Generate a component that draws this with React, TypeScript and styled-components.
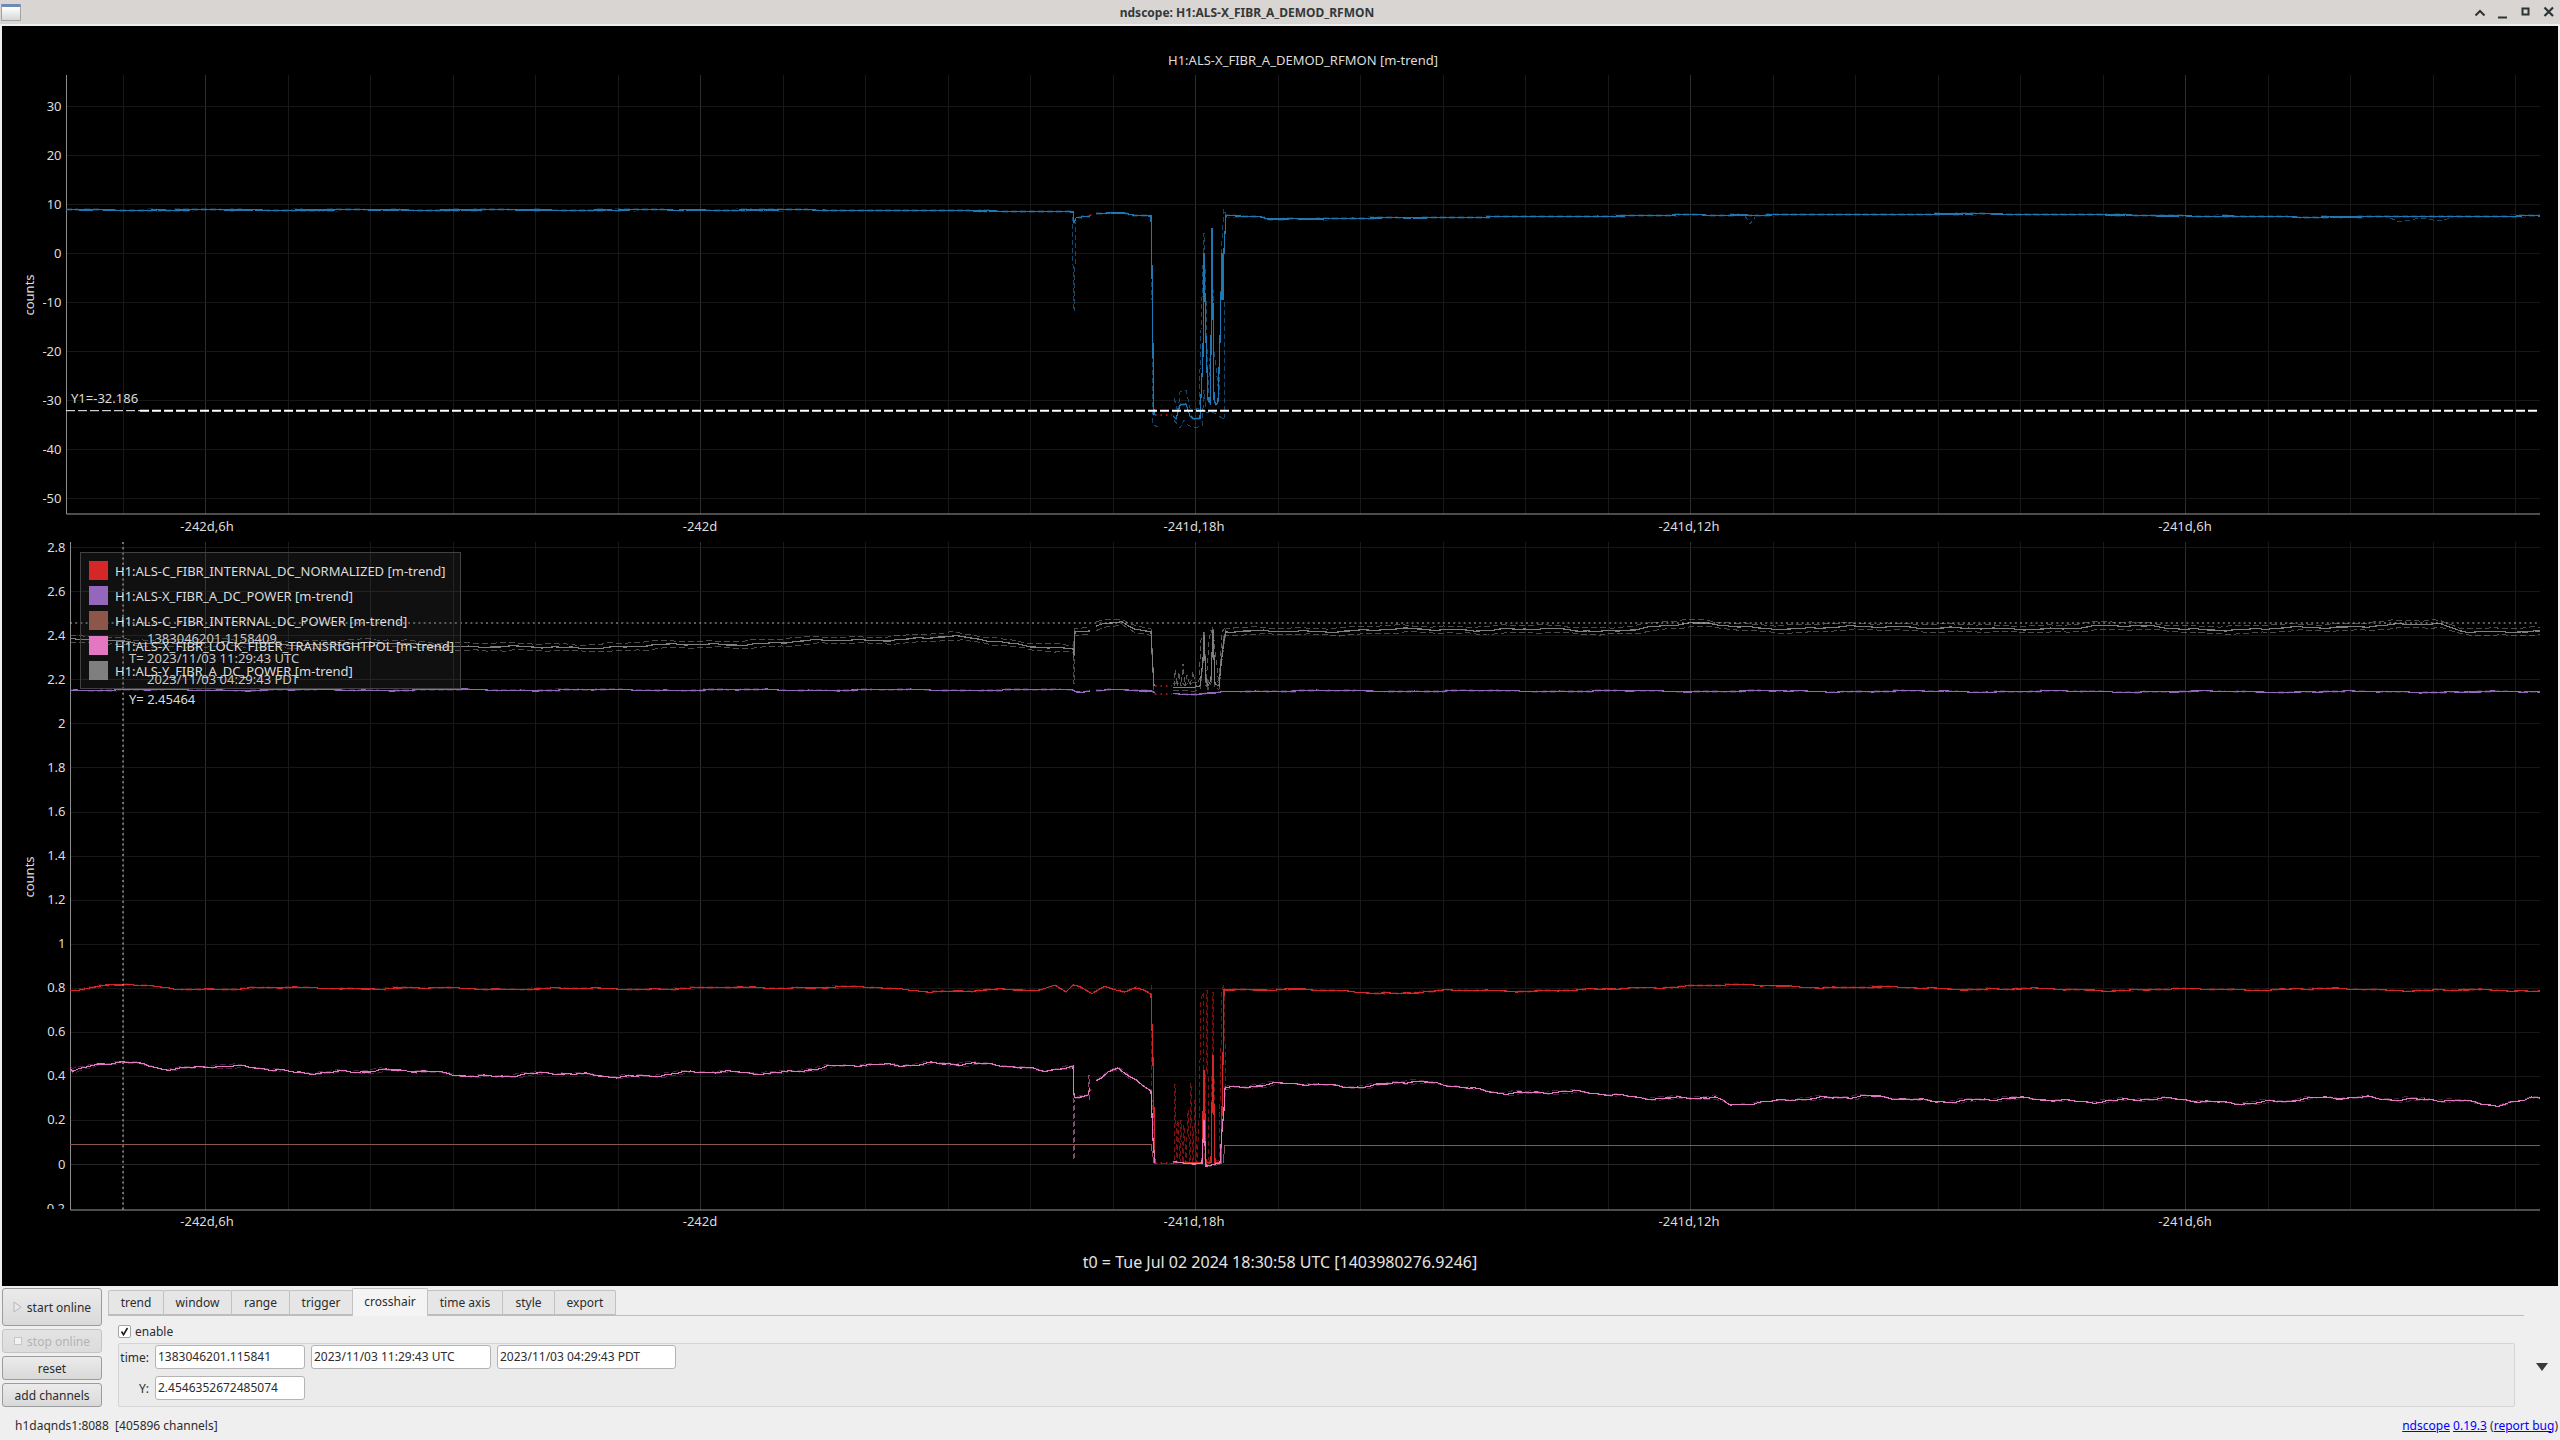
import React from 'react'
import styled, { createGlobalStyle } from 'styled-components'

type Pt = [number, number]

const GlobalStyle = createGlobalStyle`
  html, body {
    margin: 0;
    padding: 0;
    background: #efefef;
  }
  body {
    font-family: "Noto Sans", "Liberation Sans", sans-serif;
  }
`

const Window = styled.div`
  width: 2560px;
  height: 1440px;
  display: flex;
  flex-direction: column;
  background: #efefef;
  overflow: hidden;
`

const TitleBar = styled.div`
  height: 24px;
  flex: none;
  display: flex;
  align-items: center;
  background: #d8d5d2;
`

const AppIcon = styled.div`
  width: 18px;
  height: 13px;
  margin-left: 1px;
  border: 1px solid #a3a3a3;
  border-top: 3px solid #6c8ab8;
  border-radius: 1px;
  background: linear-gradient(#ffffff, #d5d8d8);
`

const TitleText = styled.div`
  flex: 1;
  text-align: center;
  font-size: 12px;
  font-weight: 700;
  color: #33383a;
`

const WindowButtons = styled.div`
  display: flex;
  gap: 9px;
  padding-right: 4px;
  svg {
    width: 14px;
    height: 14px;
    display: block;
  }
`

const PlotStage = styled.div`
  position: relative;
  flex: none;
  height: 1260px;
  margin: 2px 2px 0;
  background: #000;
  display: flex;
  flex-direction: column;
`

const PlotSvg = styled.svg`
  display: block;
  flex: none;
  width: 2556px;
  text {
    font-family: "Noto Sans", "Liberation Sans", sans-serif;
    font-size: 13px;
    fill: #dcdcdc;
  }
`

const Legend = styled.div`
  position: absolute;
  left: 78px;
  top: 526px;
  width: 381px;
  height: 137px;
  box-sizing: border-box;
  padding: 8px 0 0 8px;
  background: rgba(100, 100, 100, 0.16);
  border: 1px solid #424242;
  display: flex;
  flex-direction: column;
  gap: 6px;
`

const LegendRow = styled.div`
  height: 19px;
  display: flex;
  align-items: center;
  gap: 7px;
  font-size: 13px;
  color: #dcdcdc;
  white-space: nowrap;
`

const Swatch = styled.span<{ $color: string }>`
  width: 19px;
  height: 19px;
  flex: none;
  background: ${(p) => p.$color};
`

const TimeZero = styled.div`
  flex: 1;
  display: flex;
  align-items: center;
  justify-content: center;
  padding: 0 0 3px 0;
  font-size: 16px;
  color: #e4e4e4;
`

const Controls = styled.div`
  flex: none;
  display: flex;
  height: 122px;
  padding: 2px 0 0 2px;
  font-size: 12px;
  color: #2c2c2c;
`

const SideButtons = styled.div`
  width: 100px;
  flex: none;
  display: flex;
  flex-direction: column;
  gap: 3px;
`

const SideButton = styled.div<{ $tall?: boolean; $disabled?: boolean }>`
  height: ${(p) => (p.$tall ? 38 : 24)}px;
  box-sizing: border-box;
  display: flex;
  align-items: center;
  justify-content: center;
  gap: 5px;
  border: 1px solid ${(p) => (p.$disabled ? '#c4c4c4' : '#9c9c9c')};
  border-radius: 3px;
  background: ${(p) =>
    p.$disabled
      ? 'linear-gradient(#e3e3e3, #dcdcdc)'
      : 'linear-gradient(#ebebeb, #d9d9d9)'};
  color: ${(p) => (p.$disabled ? '#b4b4b4' : '#2c2c2c')};
  white-space: nowrap;
`

const TabColumn = styled.div`
  width: 2416px;
  margin-left: 6px;
  flex: none;
`

const TabBar = styled.div`
  height: 27px;
  display: flex;
  align-items: flex-end;
  border-bottom: 1px solid #bdbdbd;
`

const Tab = styled.div<{ $active?: boolean; $w: number }>`
  width: ${(p) => p.$w}px;
  height: ${(p) => (p.$active ? 28 : 25)}px;
  box-sizing: border-box;
  display: flex;
  align-items: center;
  justify-content: center;
  padding-bottom: ${(p) => (p.$active ? 3 : 0)}px;
  margin-bottom: ${(p) => (p.$active ? -1 : 0)}px;
  background: ${(p) => (p.$active ? '#f4f4f4' : '#e6e6e6')};
  border: 1px solid #c2c2c2;
  border-bottom: ${(p) => (p.$active ? 'none' : '1px solid #bdbdbd')};
  border-radius: 2px 2px 0 0;
  margin-right: -1px;
  position: relative;
  z-index: ${(p) => (p.$active ? 1 : 0)};
`

const TabBody = styled.div`
  padding: 9px 9px 0 10px;
`

const EnableRow = styled.label`
  height: 13px;
  display: flex;
  align-items: center;
  gap: 4px;
  margin-bottom: 5px;
`

const CheckBox = styled.span`
  width: 13px;
  height: 13px;
  box-sizing: border-box;
  background: #fff;
  border: 1px solid #a4a4a4;
  border-radius: 2px;
  display: flex;
  align-items: center;
  justify-content: center;
`

const GroupBox = styled.div`
  height: 64px;
  box-sizing: border-box;
  border: 1px solid #d4d4d4;
  border-radius: 2px;
  background: #ebebeb;
  padding: 1px 0 0 1px;
  display: grid;
  grid-template-columns: 29px 150px 180px 179px;
  grid-auto-rows: 24px;
  column-gap: 6px;
  row-gap: 7px;
  align-items: center;
  justify-content: start;
`

const FieldLabel = styled.div`
  text-align: right;
`

const TextInput = styled.div`
  height: 24px;
  box-sizing: border-box;
  padding: 0 2px;
  line-height: 22px;
  background: #fff;
  border: 1px solid #b4b4b4;
  border-radius: 3px;
  white-space: nowrap;
  overflow: hidden;
`

const ExpandColumn = styled.div`
  flex: 1;
  display: flex;
  justify-content: center;
  padding-top: 75px;
`

const Arrow = styled.span`
  width: 0;
  height: 0;
  border-left: 6px solid transparent;
  border-right: 6px solid transparent;
  border-top: 8px solid #3a3a3a;
`

const StatusBar = styled.div`
  flex: 1;
  display: flex;
  align-items: center;
  justify-content: space-between;
  padding: 0 2px 0 15px;
  font-size: 12px;
  color: #2c2c2c;
  white-space: pre;
`

const StatusLink = styled.a`
  color: #0000ff;
  text-decoration: underline;
`

// wobbly line through key points, stepped a bit like min-trend data
function wave(pts: Pt[], amp: number, seed: number, off = 0): string {
  const out: string[] = []
  for (let i = 0; i < pts.length - 1; i++) {
    const [x0, y0] = pts[i]
    const [x1, y1] = pts[i + 1]
    const n = Math.max(1, Math.floor((x1 - x0) / 6))
    for (let k = 0; k < n; k++) {
      const x = x0 + ((x1 - x0) * k) / n
      const y = y0 + ((y1 - y0) * k) / n
      const noise =
        n > 1
          ? amp *
            (Math.sin(x * 0.043 + seed) +
              0.6 * Math.sin(x * 0.127 + seed * 2) +
              0.35 * Math.sin(x * 0.31 + seed * 3))
          : 0
      out.push(`${x.toFixed(1)},${(y + noise + off).toFixed(1)}`)
    }
  }
  const last = pts[pts.length - 1]
  out.push(`${last[0]},${last[1] + off}`)
  return out.join(' ')
}

const Trace: React.FC<{
  segments: Pt[][]
  color: string
  amp?: number
  seed?: number
  dev?: number
  width?: number
  dashOpacity?: number
}> = ({ segments, color, amp = 0.6, seed = 1, dev = 1.5, width = 1.2, dashOpacity = 0.35 }) => (
  <g fill="none" shapeRendering="crispEdges">
    {segments.map((s, i) => (
      <g key={i}>
        {dev > 0 && (
          <>
            <polyline
              points={wave(s, amp, seed + 0.4, -dev)}
              stroke={color}
              strokeOpacity={dashOpacity}
              strokeWidth={1}
              strokeDasharray="6 3"
            />
            <polyline
              points={wave(s, amp, seed - 0.4, dev)}
              stroke={color}
              strokeOpacity={dashOpacity}
              strokeWidth={1}
              strokeDasharray="6 3"
            />
          </>
        )}
        <polyline points={wave(s, amp, seed)} stroke={color} strokeWidth={width} />
      </g>
    ))}
  </g>
)

const DashLine: React.FC<{ pts: Pt[]; color: string; opacity?: number }> = ({
  pts,
  color,
  opacity = 0.6,
}) => (
  <polyline
    points={pts.map((p) => p.join(',')).join(' ')}
    fill="none"
    stroke={color}
    strokeOpacity={opacity}
    strokeWidth={1}
    strokeDasharray="5 3"
    shapeRendering="crispEdges"
  />
)

const Dropout: React.FC<{ x0: number; x1: number; y: number }> = ({ x0, x1, y }) => (
  <line x1={x0} x2={x1} y1={y} y2={y} stroke="#f01010" strokeWidth={1.3} strokeDasharray="1.5 4" />
)

const TIME_TICKS: [number, string][] = [
  [207, '-242d,6h'],
  [700, '-242d'],
  [1194, '-241d,18h'],
  [1689, '-241d,12h'],
  [2185, '-241d,6h'],
]

const gridXs: number[] = []
for (let x = 1195 - 82.5 * 13; x < 2540; x += 82.5) gridXs.push(x)

const Grid: React.FC<{ x0: number; y0: number; y1: number; ys: number[] }> = ({ x0, y0, y1, ys }) => (
  <g strokeWidth={1}>
    {gridXs.map((x) => {
      const major = Math.abs(((x - 1195) / 495) % 1) < 0.01
      return (
        <line
          key={x}
          x1={Math.round(x) + 0.5}
          x2={Math.round(x) + 0.5}
          y1={y0}
          y2={y1}
          stroke={major ? '#2e2e2e' : '#191919'}
        />
      )
    })}
    {ys.map((y) => (
      <line key={y} x1={x0} x2={2540} y1={Math.round(y) + 0.5} y2={Math.round(y) + 0.5} stroke="#171717" />
    ))}
  </g>
)

const Axes: React.FC<{
  x: number
  top: number
  bottom: number
  ticks: [number, string][]
  labelY: number
  countsY: number
}> = ({ x, top, bottom, ticks, labelY, countsY }) => (
  <g>
    <line x1={x} x2={x} y1={top} y2={bottom} stroke="#8c8c8c" />
    <line x1={x} x2={2540} y1={bottom} y2={bottom} stroke="#9a9a9a" strokeWidth={1.2} />
    {ticks.map(([y, t]) => (
      <text key={t} x={x - 5} y={y + 4.5} textAnchor="end">
        {t}
      </text>
    ))}
    {TIME_TICKS.map(([tx, t]) => (
      <text key={t} x={tx} y={labelY} textAnchor="middle">
        {t}
      </text>
    ))}
    <text transform={`translate(34 ${countsY}) rotate(-90)`} textAnchor="middle">
      counts
    </text>
  </g>
)

const topTicks: [number, string][] = [30, 20, 10, 0, -10, -20, -30, -40, -50].map((v) => [
  253 - v * 4.9,
  String(v),
])
const botVals = [2.8, 2.6, 2.4, 2.2, 2, 1.8, 1.6, 1.4, 1.2, 1, 0.8, 0.6, 0.4, 0.2, 0]
const botTicks: [number, string][] = botVals.map((v) => [1164 - v * 220.3, String(v)])

const blue: Pt[][] = [
  [[66, 210], [400, 210], [800, 210], [1000, 211], [1073, 212], [1074, 223], [1076, 218], [1090, 216]],
  [
    [1096, 214], [1110, 213], [1125, 213], [1132, 215], [1151, 216], [1152, 270], [1153, 350], [1154, 415],
  ],
  [
    [1173, 416], [1176, 419], [1180, 405], [1186, 404], [1190, 416], [1194, 419], [1200, 418], [1201, 396],
    [1203, 355], [1204, 253], [1206, 340], [1208, 400], [1210, 403], [1211, 350], [1212, 228], [1213, 310],
    [1214, 400], [1216, 405], [1218, 402], [1220, 340], [1222, 253], [1223, 300], [1224, 250], [1226, 216],
    [1262, 217], [1268, 219], [1400, 218], [1700, 215], [2000, 214], [2300, 217], [2540, 216],
  ],
]

const grey: Pt[][] = [
  [
    [70, 640], [130, 642], [250, 644], [400, 644], [530, 648], [650, 646], [800, 642], [950, 637], [1030, 645],
    [1073, 649], [1074, 655], [1075, 632], [1090, 631],
  ],
  [[1096, 627], [1112, 623], [1122, 623], [1135, 629], [1151, 632], [1153, 670], [1154, 686]],
  [
    [1173, 686], [1200, 686], [1203, 660], [1204, 635], [1206, 680], [1208, 686], [1211, 680], [1213, 630],
    [1215, 684], [1219, 686], [1221, 665], [1224, 640], [1226, 632], [1270, 632], [1290, 631], [1400, 630],
    [1500, 629], [1600, 631], [1690, 624], [1800, 629], [1900, 626], [2000, 630], [2100, 626], [2250, 630],
    [2380, 625], [2440, 625], [2460, 631], [2540, 631],
  ],
]

const purple: Pt[][] = [
  [[70, 690], [1073, 690], [1076, 692], [1090, 691]],
  [[1096, 690], [1120, 689], [1152, 691], [1155, 693]],
  [[1173, 694], [1195, 695], [1215, 693], [1225, 691], [1500, 691], [2540, 692]],
]

const red: Pt[][] = [
  [
    [70, 990], [100, 986], [130, 985], [175, 989], [300, 988], [600, 989], [850, 987], [930, 991], [1000, 990],
    [1040, 991], [1055, 985], [1066, 992], [1073, 985], [1080, 986], [1092, 993], [1105, 986], [1125, 992],
    [1135, 988], [1151, 994], [1153, 1060], [1155, 1163],
  ],
  [
    [1173, 1163], [1202, 1163], [1204, 1070], [1206, 1163], [1211, 1162], [1213, 1055],
    [1215, 1163], [1221, 1163], [1223, 1060], [1224, 990], [1226, 989], [1300, 990], [1400, 993],
    [1450, 991], [1600, 990], [1700, 985], [1900, 988], [2100, 990], [2300, 989], [2540, 991],
  ],
]

const pink: Pt[][] = [
  [
    [70, 1068], [73, 1070], [122, 1063], [163, 1068], [212, 1065], [294, 1073], [343, 1070], [490, 1075],
    [653, 1075], [784, 1071], [931, 1062], [1045, 1070], [1060, 1066], [1073, 1066], [1074, 1095], [1075, 1097],
    [1088, 1095], [1090, 1088],
  ],
  [
    [1096, 1080], [1108, 1072], [1118, 1069], [1130, 1080], [1142, 1085], [1151, 1091], [1153, 1140], [1155, 1163],
  ],
  [
    [1173, 1163], [1202, 1163], [1204, 1120], [1206, 1163], [1220, 1163], [1222, 1130], [1224, 1110], [1225, 1087],
    [1300, 1085], [1370, 1085], [1400, 1082], [1500, 1091], [1640, 1096], [1715, 1099], [1730, 1107], [1796, 1097],
    [1960, 1100], [2125, 1100], [2286, 1102], [2368, 1096], [2450, 1102], [2498, 1105], [2531, 1097], [2540, 1098],
  ],
]

const brown: Pt[][] = [
  [[70, 1144.5], [1151, 1144.5], [1154, 1163]],
  [[1223, 1163], [1225, 1145.5], [2540, 1145.5]],
]

const WindowControls = () => (
  <WindowButtons>
    <svg viewBox="0 0 14 14">
      <path d="M2.5 10.5 7 6l4.5 4.5" fill="none" stroke="#2e3436" strokeWidth="2" />
    </svg>
    <svg viewBox="0 0 14 14">
      <rect x="2" y="11.5" width="9" height="2" fill="#2e3436" />
    </svg>
    <svg viewBox="0 0 14 14">
      <rect x="3.5" y="3.5" width="6" height="6" fill="none" stroke="#2e3436" strokeWidth="2" />
    </svg>
    <svg viewBox="0 0 14 14">
      <path d="M2.5 2.5l8.5 8.5M11 2.5l-8.5 8.5" fill="none" stroke="#2e3436" strokeWidth="2.2" />
    </svg>
  </WindowButtons>
)

const TopPlot = () => (
  <PlotSvg viewBox="2 26 2556 512" height={512}>
    <text x={1303} y={65} textAnchor="middle">
      H1:ALS-X_FIBR_A_DEMOD_RFMON [m-trend]
    </text>
    <Grid x0={66} y0={75} y1={514} ys={topTicks.map((t) => t[0])} />
    <Axes x={66.5} top={75} bottom={514} ticks={topTicks} labelY={531} countsY={295} />
    <Trace segments={blue} color="#1f77b4" amp={0.25} seed={2} dev={1} dashOpacity={0.3} />
    <DashLine pts={[[1072, 216], [1074, 312], [1076, 222]]} color="#1f77b4" />
    <DashLine pts={[[1151, 218], [1152, 300], [1153, 425], [1158, 427]]} color="#1f77b4" />
    <DashLine
      pts={[[1174, 398], [1178, 412], [1180, 392], [1186, 390], [1190, 408], [1194, 410], [1199, 408], [1201, 330], [1204, 233], [1206, 300], [1208, 395], [1211, 340], [1212, 229], [1214, 350], [1219, 395], [1222, 240], [1224, 209], [1226, 216]]}
      color="#1f77b4"
    />
    <DashLine
      pts={[[1174, 420], [1180, 428], [1184, 420], [1188, 425], [1194, 428], [1202, 426], [1204, 390], [1206, 412], [1212, 412], [1216, 414], [1222, 418], [1224, 420], [1225, 300]]}
      color="#1f77b4"
    />
    <DashLine pts={[[1745, 216], [1750, 224], [1755, 217]]} color="#1f77b4" />
    <DashLine pts={[[2390, 218], [2400, 222], [2420, 218], [2440, 221], [2450, 218]]} color="#1f77b4" />
    <Dropout x0={1090} x1={1095} y={215} />
    <Dropout x0={1155} x1={1172} y={415} />
    <line x1={66} x2={140} y1={410.7} y2={410.7} stroke="#fff" strokeWidth={1} strokeDasharray="9 3" />
    <line x1={140} x2={2540} y1={410.7} y2={410.7} stroke="#fff" strokeWidth={2} strokeDasharray="9 3" />
    <text x={71} y={403}>
      Y1=-32.186
    </text>
  </PlotSvg>
)

const BottomPlot = () => (
  <PlotSvg viewBox="2 538 2556 702" height={702}>
    <defs>
      <clipPath id="axis-cut">
        <rect x={20} y={1190} width={50} height={19} />
      </clipPath>
    </defs>
    <Grid x0={70} y0={542} y1={1210} ys={botTicks.map((t) => t[0])} />
    <line x1={70} x2={2540} y1={1164.5} y2={1164.5} stroke="#262626" />
    <Axes x={70.5} top={542} bottom={1210} ticks={botTicks} labelY={1226} countsY={877} />
    <text x={65} y={1213} textAnchor="end" clipPath="url(#axis-cut)">
      -0.2
    </text>
    <Trace segments={grey} color="#7f7f7f" amp={1.1} seed={1} dev={3.5} width={1.2} dashOpacity={0.6} />
    <Trace segments={purple} color="#9467bd" amp={0.6} seed={4} dev={0.6} dashOpacity={0.3} />
    <Trace segments={brown} color="#8c564b" amp={0} seed={3} dev={0} width={1} />
    <DashLine
      pts={[[1151, 985], [1152, 1100], [1155, 1163], [1174, 1163], [1175, 1084], [1177, 1163], [1178, 1120], [1180, 1163], [1181, 1120], [1183, 1163], [1184, 1125], [1186, 1163], [1188, 1110], [1190, 1163], [1191, 1083], [1193, 1163], [1195, 1100], [1197, 1163], [1199, 1120], [1201, 1000], [1203, 992], [1205, 1160], [1207, 990], [1209, 1160], [1211, 1163], [1213, 992], [1215, 1160], [1219, 1160], [1222, 990], [1224, 985], [1226, 1100]]}
      color="#d62020"
      opacity={0.55}
    />
    <Trace segments={red} color="#d62728" amp={0.8} seed={5} dev={0.7} dashOpacity={0.3} />
    <Trace segments={pink} color="#e377c2" amp={1.8} seed={6} dev={0.8} dashOpacity={0.3} />
    <DashLine pts={[[1073, 640], [1074, 684], [1075, 640]]} color="#7f7f7f" />
    <DashLine
      pts={[[1174, 686], [1175, 670], [1177, 686], [1179, 672], [1181, 686], [1183, 664], [1185, 686], [1187, 675], [1190, 686], [1193, 672], [1196, 686], [1199, 680], [1201, 640], [1204, 632], [1206, 686], [1209, 640], [1211, 630], [1214, 640], [1219, 686], [1222, 632], [1225, 628]]}
      color="#7f7f7f"
      opacity={0.7}
    />
    <DashLine pts={[[1073, 1066], [1074, 1160], [1075, 1100]]} color="#e377c2" />
    <DashLine pts={[[1088, 1095], [1089, 1075], [1090, 1100]]} color="#e377c2" />
    <Dropout x0={1090} x1={1095} y={1090} />
    <Dropout x0={1155} x1={1172} y={686} />
    <Dropout x0={1155} x1={1172} y={694} />
    <Dropout x0={1155} x1={1172} y={1163} />
    <line x1={70} x2={2540} y1={623} y2={623} stroke="#b4b4b4" strokeWidth={1.2} strokeDasharray="2 3.2" />
    <line x1={123} x2={123} y1={542} y2={1210} stroke="#b4b4b4" strokeWidth={1.2} strokeDasharray="2 3.2" />
    <text x={147} y={643}>1383046201.1158409</text>
    <text x={129} y={663}>T= 2023/11/03 11:29:43 UTC</text>
    <text x={147} y={684}>2023/11/03 04:29:43 PDT</text>
    <text x={129} y={704}>Y= 2.45464</text>
  </PlotSvg>
)

const LEGEND: [string, string][] = [
  ['#d62728', 'H1:ALS-C_FIBR_INTERNAL_DC_NORMALIZED [m-trend]'],
  ['#9467bd', 'H1:ALS-X_FIBR_A_DC_POWER [m-trend]'],
  ['#8c564b', 'H1:ALS-C_FIBR_INTERNAL_DC_POWER [m-trend]'],
  ['#e377c2', 'H1:ALS-X_FIBR_LOCK_FIBER_TRANSRIGHTPOL [m-trend]'],
  ['#7f7f7f', 'H1:ALS-Y_FIBR_A_DC_POWER [m-trend]'],
]

const TABS: [string, number][] = [
  ['trend', 56],
  ['window', 69],
  ['range', 59],
  ['trigger', 64],
  ['crosshair', 76],
  ['time axis', 76],
  ['style', 53],
  ['export', 62],
]

export default function App() {
  return (
    <Window>
      <GlobalStyle />
      <TitleBar>
        <AppIcon />
        <TitleText>ndscope: H1:ALS-X_FIBR_A_DEMOD_RFMON</TitleText>
        <WindowControls />
      </TitleBar>
      <PlotStage>
        <TopPlot />
        <BottomPlot />
        <Legend>
          {LEGEND.map(([color, name]) => (
            <LegendRow key={name}>
              <Swatch $color={color} />
              {name}
            </LegendRow>
          ))}
        </Legend>
        <TimeZero>t0 = Tue Jul 02 2024 18:30:58 UTC [1403980276.9246]</TimeZero>
      </PlotStage>
      <Controls>
        <SideButtons>
          <SideButton $tall>
            <svg width="9" height="12" viewBox="0 0 9 12">
              <path d="M1 1l7 5-7 5z" fill="#e8e8e8" stroke="#b8b8b8" />
            </svg>
            start online
          </SideButton>
          <SideButton $disabled>
            <svg width="8" height="8" viewBox="0 0 8 8">
              <rect x="0.5" y="0.5" width="7" height="7" fill="#f2f2f2" stroke="#c6c6c6" />
            </svg>
            stop online
          </SideButton>
          <SideButton>reset</SideButton>
          <SideButton>add channels</SideButton>
        </SideButtons>
        <TabColumn>
          <TabBar>
            {TABS.map(([label, w]) => (
              <Tab key={label} $w={w} $active={label === 'crosshair'}>
                {label}
              </Tab>
            ))}
          </TabBar>
          <TabBody>
            <EnableRow>
              <CheckBox>
                <svg width="9" height="9" viewBox="0 0 9 9">
                  <path d="M1.5 4.5l2 3.2L7.5 1" fill="none" stroke="#1c1c1c" strokeWidth="1.6" />
                </svg>
              </CheckBox>
              enable
            </EnableRow>
            <GroupBox>
              <FieldLabel>time:</FieldLabel>
              <TextInput>1383046201.115841</TextInput>
              <TextInput>2023/11/03 11:29:43 UTC</TextInput>
              <TextInput>2023/11/03 04:29:43 PDT</TextInput>
              <FieldLabel>Y:</FieldLabel>
              <TextInput>2.4546352672485074</TextInput>
            </GroupBox>
          </TabBody>
        </TabColumn>
        <ExpandColumn>
          <Arrow />
        </ExpandColumn>
      </Controls>
      <StatusBar>
        <span>h1daqnds1:8088  [405896 channels]</span>
        <span>
          <StatusLink href="#">ndscope</StatusLink> <StatusLink href="#">0.19.3</StatusLink> (
          <StatusLink href="#">report bug</StatusLink>)
        </span>
      </StatusBar>
    </Window>
  )
}
